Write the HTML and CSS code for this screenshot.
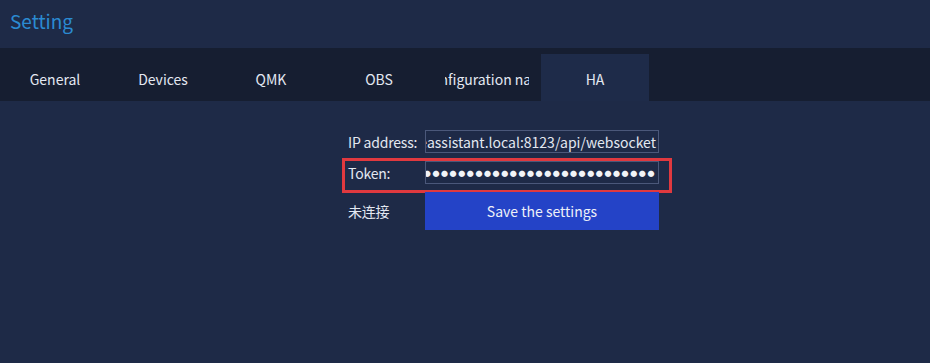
FILE: index.html
```
<!DOCTYPE html>
<html lang="zh-CN">
<head>
    <meta charset="UTF-8">
    <title>Setting</title>
    <link rel="stylesheet" href="styles.css">
</head>
<body>
    <div class="wrap">
        <h1 class="title">Setting</h1>
        <div class="tabs">
            <div class="tab">General</div>
            <div class="tab">Devices</div>
            <div class="tab">QMK</div>
            <div class="tab">OBS</div>
            <div class="tab"><span class="clip">Configuration name</span></div>
            <div class="tab active">HA</div>
        </div>

        <!-- HA 설정 -->
        <div class="panel">
            <div class="row">
                <span class="label">IP address:</span>
                <div class="field"><span>ws://homeassistant.local:8123/api/websocket</span></div>
            </div>
            <div class="row mark">
                <span class="label">Token:</span>
                <div class="field dots"><span>●●●●●●●●●●●●●●●●●●●●●●●●●●●●●●●●●●●●●●●●</span></div>
            </div>
            <div class="row">
                <span class="label">未连接</span>
                <button class="save" type="button">Save the settings</button>
            </div>
        </div>
    </div>
</body>
</html>
```
FILE: styles.css
```
body{
    margin: 0;
    background: #1e2a47;
    color: #e3e8f1;
    font-family: "Noto Sans CJK SC", "Noto Sans", sans-serif;
    font-size: 14px;
}
.wrap{
    width: 930px;
    height: 363px;
    overflow: hidden;
}
.title{
    margin: 0;
    height: 48px;
    padding-left: 10px;
    font-size: 19px;
    font-weight: normal;
    line-height: 42px;
    color: #2b8ad2;
}
/* 탭 */
.tabs{
    display: flex;
    align-items: flex-end;
    height: 53px;
    padding-left: 1px;
    background: #161e31;
}
.tab{
    width: 108px;
    height: 47px;
    display: flex;
    justify-content: center;
    align-items: center;
    padding-top: 3px;
    box-sizing: border-box;
    font-size: 14px;
}
.tab.active{
    background: #1e2b49;
}
.clip{
    width: 84px;
    display: flex;
    justify-content: center;
    overflow: hidden;
    white-space: nowrap;
}
/* 입력 영역 */
.panel{
    padding: 29px 0 0 348px;
    display: flex;
    flex-direction: column;
    align-items: flex-start;
    gap: 8px;
}
.row{
    width: 311px;
    display: flex;
    align-items: center;
    position: relative;
}
.label{
    width: 77px;
    white-space: nowrap;
    letter-spacing: -0.2px;
}
.field{
    width: 234px;
    height: 23px;
    box-sizing: border-box;
    border: 1px solid #4b587a;
    display: flex;
    justify-content: flex-end;
    align-items: center;
    overflow: hidden;
    white-space: nowrap;
    padding-right: 2px;
}
.dots span{
    font-size: 7px;
    letter-spacing: 1.6px;
    color: #f2f4f8;
}
.mark::after{
    content: "";
    position: absolute;
    left: -6px;
    top: -3px;
    right: -13px;
    bottom: -9px;
    border: 3px solid #e0393f;
}
.save{
    width: 234px;
    height: 38px;
    border: none;
    background: #2443c7;
    color: #eef1f8;
    font-family: inherit;
    font-size: 14px;
}
```
